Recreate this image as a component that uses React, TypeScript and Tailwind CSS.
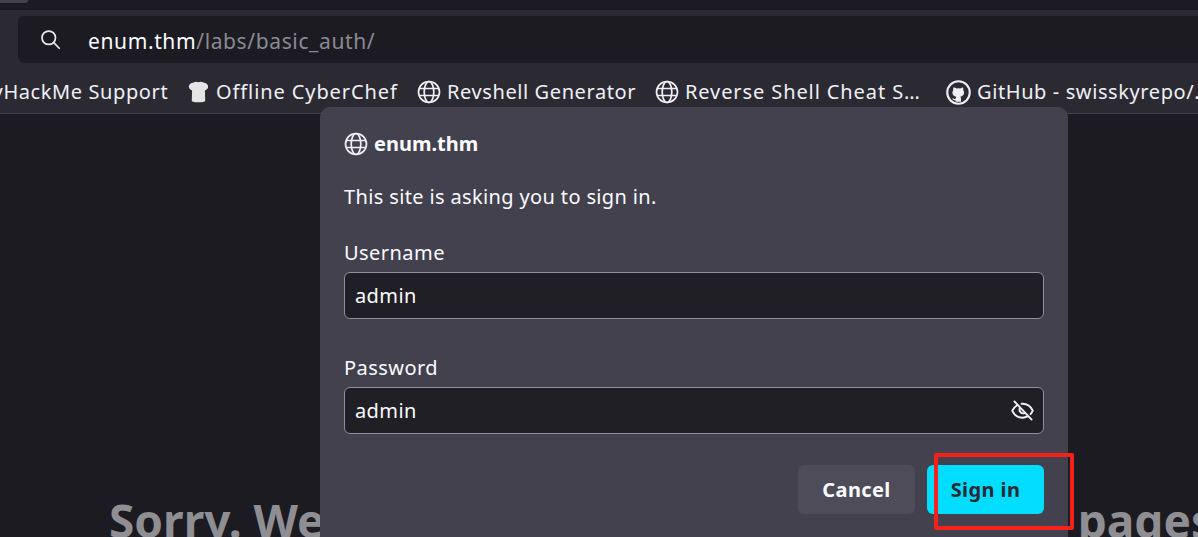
import React from "react";

const GlobeIcon = ({ className }: { className?: string }) => (
  <svg viewBox="0 0 24 24" fill="none" stroke="currentColor" strokeWidth={1.7} className={className}>
    <circle cx="12" cy="12" r="10.5" />
    <ellipse cx="12" cy="12" rx="4.8" ry="10.5" />
    <path d="M2.3 8.5h19.4M2.3 15.5h19.4" />
  </svg>
);

const ChefIcon = ({ className }: { className?: string }) => (
  <svg viewBox="0 0 24 24" className={className} fill="currentColor">
    <path d="M7 1.500c1.500-1 3.500-.7 5-.2 1.500-.5 3.500-.8 5 .2 3 .4 5.500 2.400 5 5-.3 1.800-2 2.800-3.300 3.300L19 21c-4 1.700-10 1.700-14 0l.3-11.200C4 9.300 2.300 8.300 2 6.500c-.5-2.600 2-4.600 5-5z" />
  </svg>
);

const GithubIcon = ({ className }: { className?: string }) => (
  <svg viewBox="0 0 24 24" className={className}>
    <circle cx="12" cy="12" r="10.800" fill="none" stroke="currentColor" strokeWidth={2} />
    <path
      fill="currentColor"
      transform="translate(2.4 2.800) scale(0.8)"
      d="M6.500 5.500c1 0 2.500.6 3.300 1.300a8 8 0 0 1 4.400 0c.8-.7 2.300-1.300 3.300-1.300.4 1.200.4 2.300.1 3.100.8 1 1.100 2 1.100 3 0 3-1.800 4.500-4.600 4.900.6.500.9 1.300.9 2.300v3.700h-6.600v-1.800c-2.400.5-3.300-.8-3.800-2l1.300-.4c.5 1 1.200 1.300 2.500 1 0-1 .3-2 .9-2.700-2.800-.4-4.600-1.900-4.600-5 0-1 .3-2 1.100-3-.3-.8-.3-1.900.1-3.100z"
    />
  </svg>
);

const EyeOffIcon = ({ className }: { className?: string }) => (
  <svg viewBox="0 0 24 24" fill="none" stroke="currentColor" strokeWidth={2} strokeLinecap="round" className={className}>
    <path d="M3.500 2.500l18 19" />
    <path d="M6.500 6.500C4 8 2.300 10 1.300 12.200c2 4.600 6 7.300 10.700 7.300 1.900 0 3.600-.4 5.200-1.300M11 5c.4 0 .7-.1 1-.1 4.700 0 8.700 2.800 10.700 7.300-.6 1.300-1.400 2.500-2.300 3.500" />
    <path d="M9 9.800a4 4 0 0 0 5 5" />
  </svg>
);

const SearchIcon = ({ className }: { className?: string }) => (
  <svg viewBox="0 0 24 24" fill="none" stroke="currentColor" strokeWidth={2} strokeLinecap="round" className={className}>
    <circle cx="10" cy="10" r="7.700" />
    <path d="M15.700 15.700l6.300 6.300" />
  </svg>
);

const Bookmark = ({ width, icon, label }: { width: string; icon?: React.ReactNode; label: string }) => (
  <div className={`flex shrink-0 items-center gap-1.5 overflow-hidden whitespace-nowrap ${width}`}>
    {icon}
    <span className="shrink-0">{label}</span>
  </div>
);

const Field = ({ label, value, icon }: { label: string; value: string; icon?: React.ReactNode }) => (
  <div className="flex flex-col">
    <label className="h-[36px] pt-[2px] text-[20px] leading-[30px] tracking-[0.45px] text-[#fbfbfe]">{label}</label>
    <div className="flex h-[47px] items-center justify-between rounded-[6px] border border-[#8f8f9d] bg-[#201f26] pl-[10px] pr-[9px] text-[20px] tracking-[0.4px] text-[#fbfbfe]">
      <span>{value}</span>
      {icon}
    </div>
  </div>
);

export default function App() {
  return (
    <div className="relative flex h-[537px] w-[1198px] flex-col overflow-hidden bg-[#1c1b22] font-['Noto_Sans',sans-serif] text-[#fbfbfe]">
      {/* tab strip */}
      <div className="h-[10px] shrink-0 bg-[#1c1b22]">
        <div className="h-[3px] w-[28px] rounded-br-[4px] bg-[#42414d]" />
      </div>

      {/* toolbar */}
      <div className="flex h-[54px] shrink-0 items-start bg-[#2b2a33] pl-[18px] pt-[6px]">
        <div className="flex h-[47px] flex-1 items-center rounded-l-[6px] bg-[#1c1b22] pl-[22px] pt-[5px] text-[21px]">
          <SearchIcon className="mt-[-5px] h-[21px] w-[21px] shrink-0 text-[#e8e8ec]" />
          <span className="ml-[27px] tracking-[0.62px]">
            enum.thm<span className="text-[#8a8a92]">/labs/basic_auth/</span>
          </span>
        </div>
      </div>

      {/* bookmarks */}
      <div className="flex h-[50px] shrink-0 items-center overflow-hidden border-b border-[#42414d] bg-[#2b2a33] pt-[7px] text-[20px] tracking-[0.9px] text-[#f0f0f4]">
        <Bookmark width="ml-[-27px] w-[214px] tracking-[0.6px]" label="TryHackMe Support" />
        <Bookmark width="w-[230px]" icon={<ChefIcon className="h-[23px] w-[23px] shrink-0 text-[#e4e4e4]" />} label="Offline CyberChef" />
        <Bookmark width="w-[238px] tracking-[0.6px]" icon={<GlobeIcon className="h-[24px] w-[24px] shrink-0" />} label="Revshell Generator" />
        <Bookmark width="w-[291px]" icon={<GlobeIcon className="h-[24px] w-[24px] shrink-0" />} label="Reverse Shell Cheat S…" />
        <Bookmark width="w-[260px] tracking-[0.6px]" icon={<GithubIcon className="h-[25px] w-[25px] shrink-0" />} label="GitHub - swisskyrepo/..." />
      </div>

      {/* page behind the dialog */}
      <div className="flex flex-1 items-start justify-between overflow-hidden whitespace-nowrap pl-[109px] pt-[376px] text-[46px] font-bold leading-[60px] text-[#8e8e93]">
        <span>Sorry. We</span>
        <span className="mr-[-16px]">pages</span>
      </div>

      {/* sign in dialog */}
      <div className="absolute left-[320px] top-[107px] h-[440px] w-[748px] rounded-[10px] bg-[#42414d] px-[24px] pt-[24px]">
        <div className="flex h-[26px] items-center gap-[6px]">
          <GlobeIcon className="h-[24px] w-[24px] shrink-0 text-[#f0f0f4]" />
          <span className="text-[20px] font-bold">enum.thm</span>
        </div>
        <p className="mt-[25px] text-[20px] leading-[30px] tracking-[0.36px]">This site is asking you to sign in.</p>
        <div className="mt-[24px] flex flex-col gap-[32px]">
          <Field label="Username" value="admin" />
          <Field
            label="Password"
            value="admin"
            icon={<EyeOffIcon className="h-[23px] w-[23px] text-[#f0f0f4]" />}
          />
        </div>
        <div className="mt-[31px] flex justify-end gap-[12px]">
          <button className="h-[49px] w-[117px] rounded-[6px] bg-[#4d4c58] text-[20px] font-bold tracking-[0.4px]">Cancel</button>
          <button className="h-[49px] w-[117px] rounded-[6px] bg-[#00ddff] text-[20px] font-bold tracking-[0.4px] text-[#2b2a33]">Sign in</button>
        </div>
      </div>

      {/* red annotation box */}
      <div className="absolute left-[934px] top-[453px] h-[77px] w-[140px] rounded-[2px] border-[4px] border-[#f5211a]" />
    </div>
  );
}
